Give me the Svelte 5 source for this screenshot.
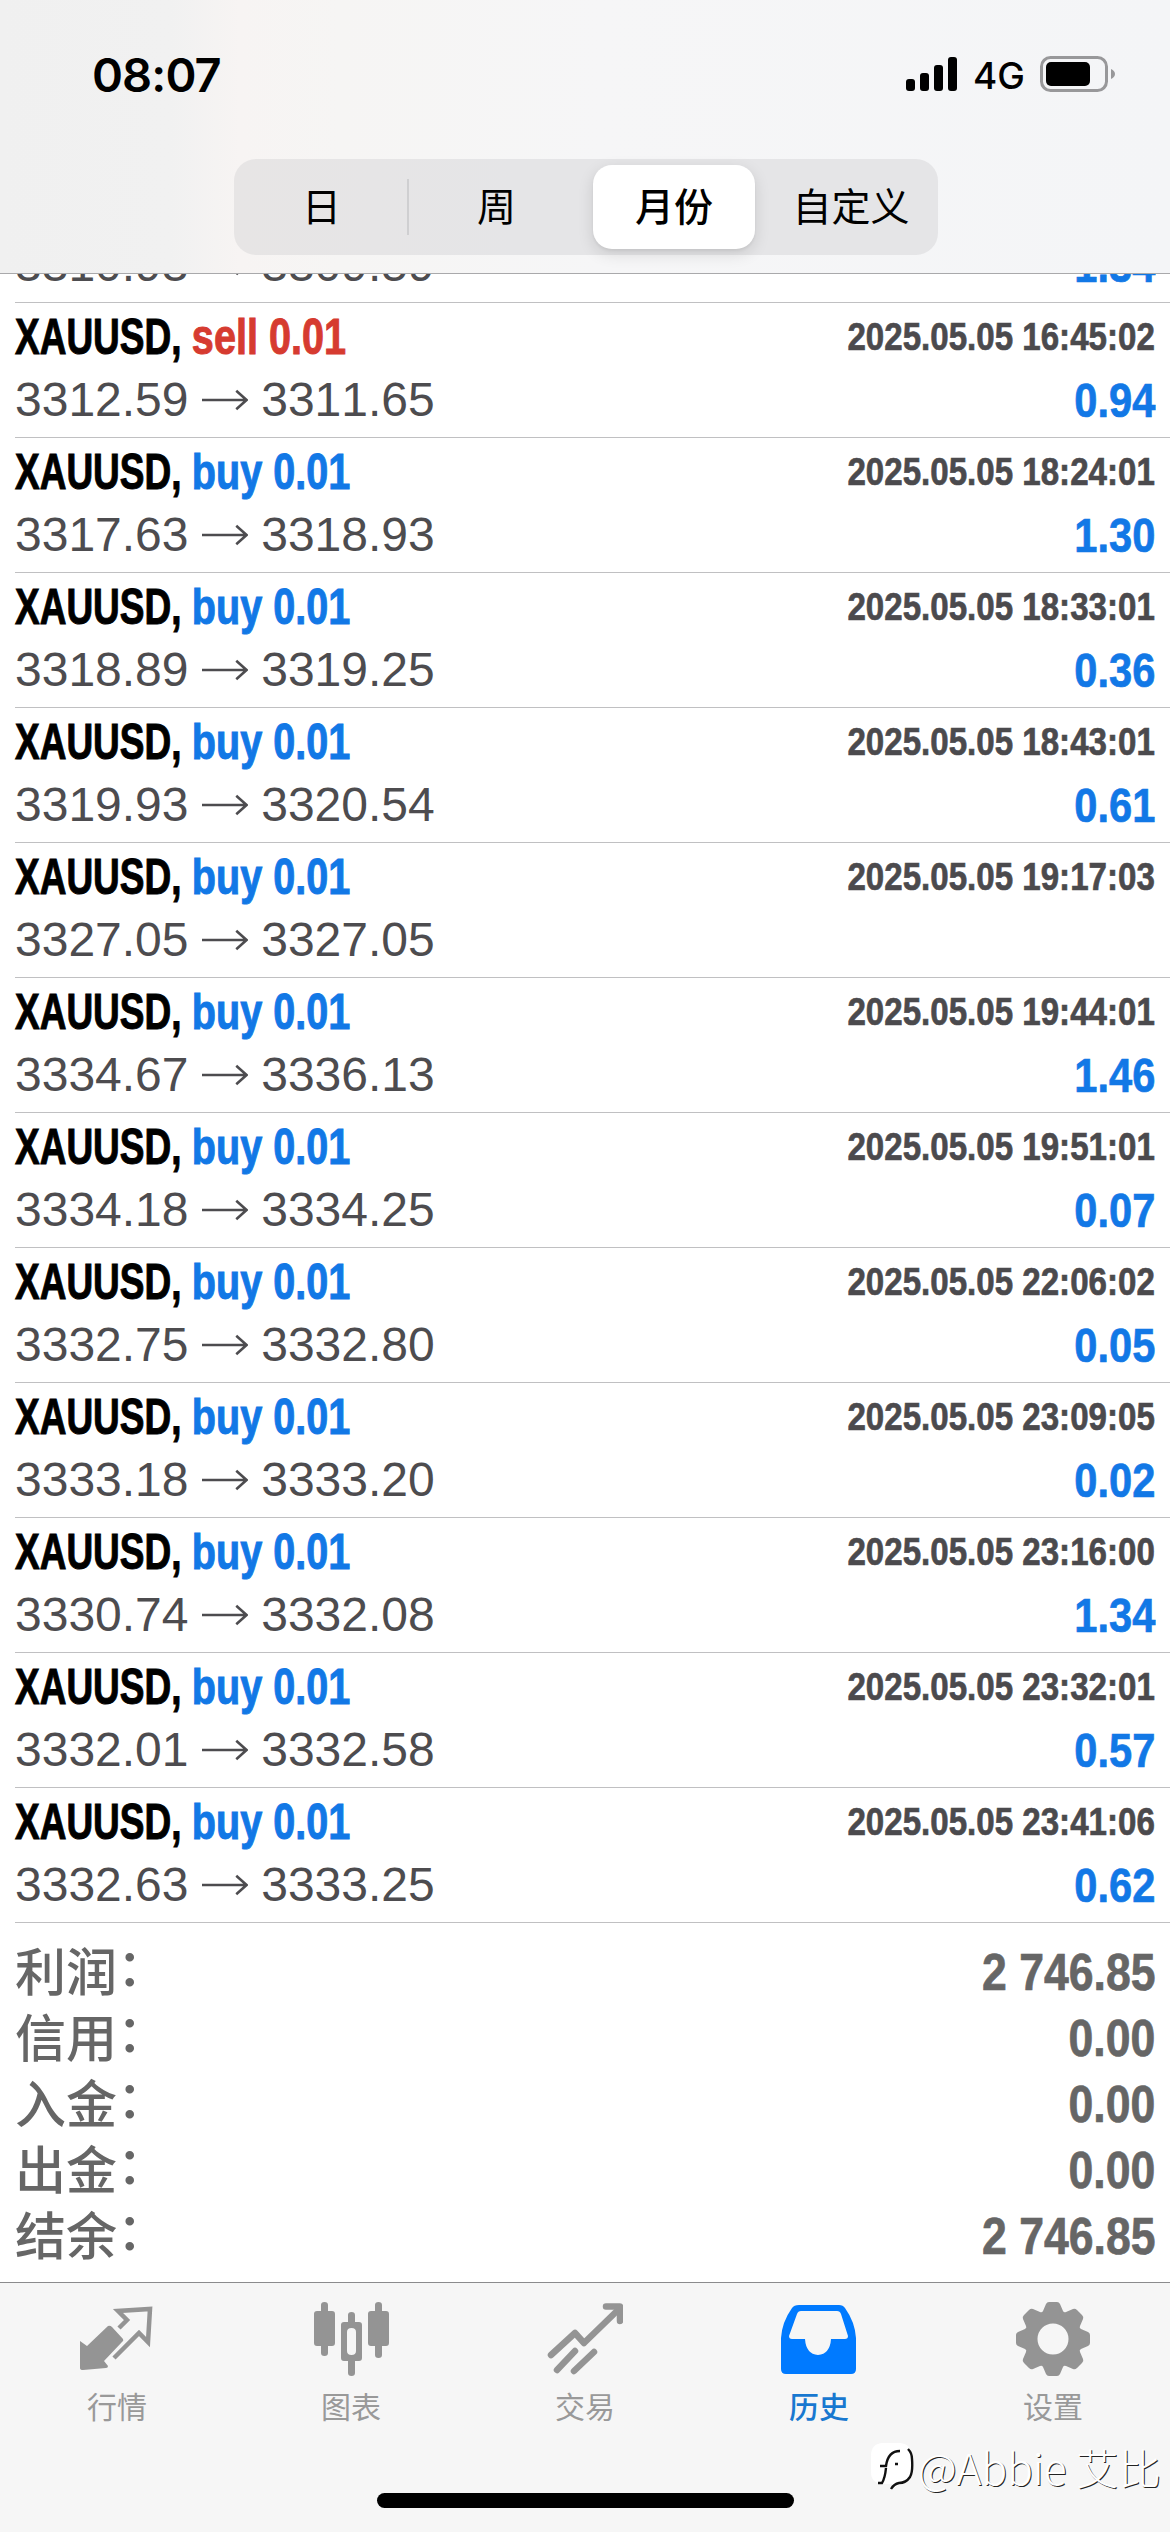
<script>
  const segments = ['日', '周', '月份', '自定义'];
  const selected = 2;

  // the list is scrolled: only the lower half of the first deal is in view
  const deals = [
    { open: '3310.93', close: '3309.59', profit: '1.34' },
    { side: 'sell', open: '3312.59', close: '3311.65', time: '2025.05.05 16:45:02', profit: '0.94' },
    { side: 'buy', open: '3317.63', close: '3318.93', time: '2025.05.05 18:24:01', profit: '1.30' },
    { side: 'buy', open: '3318.89', close: '3319.25', time: '2025.05.05 18:33:01', profit: '0.36' },
    { side: 'buy', open: '3319.93', close: '3320.54', time: '2025.05.05 18:43:01', profit: '0.61' },
    { side: 'buy', open: '3327.05', close: '3327.05', time: '2025.05.05 19:17:03', profit: '' },
    { side: 'buy', open: '3334.67', close: '3336.13', time: '2025.05.05 19:44:01', profit: '1.46' },
    { side: 'buy', open: '3334.18', close: '3334.25', time: '2025.05.05 19:51:01', profit: '0.07' },
    { side: 'buy', open: '3332.75', close: '3332.80', time: '2025.05.05 22:06:02', profit: '0.05' },
    { side: 'buy', open: '3333.18', close: '3333.20', time: '2025.05.05 23:09:05', profit: '0.02' },
    { side: 'buy', open: '3330.74', close: '3332.08', time: '2025.05.05 23:16:00', profit: '1.34' },
    { side: 'buy', open: '3332.01', close: '3332.58', time: '2025.05.05 23:32:01', profit: '0.57' },
    { side: 'buy', open: '3332.63', close: '3333.25', time: '2025.05.05 23:41:06', profit: '0.62' }
  ];

  const summary = [
    ['利润', '2 746.85'],
    ['信用', '0.00'],
    ['入金', '0.00'],
    ['出金', '0.00'],
    ['结余', '2 746.85']
  ];

  const tabs = [
    { id: 'quotes', label: '行情' },
    { id: 'charts', label: '图表' },
    { id: 'trade', label: '交易' },
    { id: 'history', label: '历史' },
    { id: 'settings', label: '设置' }
  ];
  const active = 'history';
</script>

<div class="screen">
  <header>
    <div class="status">
      <span class="clock">08:07</span>
      <div class="indicators">
        <svg class="signal" viewBox="0 0 51 34">
          <rect x="0" y="22" width="9" height="12" rx="3" />
          <rect x="14" y="16" width="9" height="18" rx="3" />
          <rect x="28" y="8" width="9" height="26" rx="3" />
          <rect x="42" y="0" width="9" height="34" rx="3" />
        </svg>
        <span class="network">4G</span>
        <svg class="battery" viewBox="0 0 76 36">
          <rect x="1.5" y="1.5" width="65" height="33" rx="9" fill="none" stroke="#98989a" stroke-width="3" />
          <rect x="6" y="6" width="44" height="24" rx="5" />
          <path d="M71 13q4 2 4 5t-4 5z" fill="#98989a" />
        </svg>
      </div>
    </div>
    <div class="segmented">
      {#each segments as segment, i}
        <div class="segment" class:selected={i === selected} class:divided={i === 0}>{segment}</div>
      {/each}
    </div>
  </header>

  <main>
    <div class="deals">
      {#each deals as deal}
        <div class="deal">
          {#if deal.side}
            <div class="line">
              <span class="symbol">XAUUSD, <span class="side {deal.side}">{deal.side} 0.01</span></span>
              <span class="time">{deal.time}</span>
            </div>
          {/if}
          <div class="line prices">
            <span class="price">
              {deal.open}
              <svg class="arrow" viewBox="0 0 47 22"><path d="M0 11H45M35 1.500L45.500 11L35 20.500" /></svg>
              {deal.close}
            </span>
            <span class="profit">{deal.profit}</span>
          </div>
        </div>
      {/each}
    </div>
    <div class="summary">
      {#each summary as [label, value]}
        <div class="total">
          <span class="label">{label}<span class="colon">：</span></span>
          <span class="value">{value}</span>
        </div>
      {/each}
    </div>
  </main>

  <nav>
    {#each tabs as tab}
      <div class="tab" class:active={tab.id === active}>
        <svg class="icon" viewBox="0 0 76 76">
          {#if tab.id === 'quotes'}
            <path d="M1 40l7 5L29 25q2-1 4 1l11 12q1 2-1 3L25 60l4 5q0 2-2 2L4 69q-3 0-3-2z" />
            <path class="stroke thin" d="M40 27l8-8-9-9L71 8 69 41 60 32 35 57" />
          {:else if tab.id === 'charts'}
            <path d="M8 4q0-3 3.500-3T15 4v6h4q3 0 3 3v29q0 3-3 3h-4v7q0 3-3.500 3T8 52v-7H4q-3 0-3-3V13q0-3 3-3h4z" />
            <path d="M62 4q0-3 3.500-3T69 4v6h4q3 0 3 3v29q0 3-3 3h-4v9q0 3-3.500 3T62 54v-9h-4q-3 0-3-3V13q0-3 3-3h4z" />
            <path fill-rule="evenodd" d="M35 14q0-3 3.500-3T42 14v7h4q3 0 3 3v33q0 3-3 3h-4v12q0 3-3.500 3T35 72V60h-4q-3 0-3-3V24q0-3 3-3h4zM38.500 27q-4.500 0-4.500 4v19q0 4 4.500 4t4.500-4V31q0-4-4.500-4z" />
          {:else if tab.id === 'trade'}
            <path class="stroke" d="M4 54L28 32l9 10L72 8" />
            <path class="stroke" d="M59 5.500H73V20" />
            <path class="stroke" d="M28 50L10 69M47 51L27 70" />
          {:else if tab.id === 'history'}
            <path fill-rule="evenodd" d="M18 4H58q4 0 6 3 10 14 11 30V68q0 5-5 5H5q-5 0-5-5V37Q1 21 11 7q2-3 7-3zM20 10q-3 0-4 3L8 35q0 3 3 3H24q1 15 13 16 12-1 13-16H64q3 0 3-3L60 13q-1-3-4-3z" />
          {:else}
            <path fill-rule="evenodd" d="M31 3q1-2 3-2h8q2 0 3 2l3 7q1 2 3 1l7-3q2-1 4 1l5 5q2 2 1 4l-3 7q-1 2 1 3l7 3q2 1 2 3v8q0 2-2 3l-7 3q-2 1-1 3l3 7q1 2-1 4l-5 5q-2 2-4 1l-7-3q-2-1-3 1l-3 7q-1 2-3 2h-8q-2 0-3-2l-3-7q-1-2-3-1l-7 3q-2 1-4-1l-5-5q-2-2-1-4l3-7q1-2-1-3l-7-3q-2-1-2-3v-8q0-2 2-3l7-3q2-1 1-3l-3-7q-1-2 1-4l5-5q2-2 4-1l7 3q2 1 3-1zM38 22.500a15.500 15.500 0 1 0 0 31a15.500 15.500 0 1 0 0-31z" />
          {/if}
        </svg>
        <span>{tab.label}</span>
      </div>
    {/each}
    <div class="home"></div>
    <div class="watermark">
      <svg viewBox="0 0 44 50">
        <path class="bubble" d="M12 1H30Q42 2 42 16V30Q42 40 32 41L22 47 22 42H12Q1 41 1 30V14Q1 2 12 1z" />
        <path class="edge" d="M38 7Q42 11 42 17 43 30 40 35 36 41 29 41 24 42 21 47M10 24H16Q18 9 30 9M16 26Q15 36 12 41H8M25 22H28" />
      </svg>
      <span>@Abbie 艾比</span>
    </div>
  </nav>
</div>

<style>
  :global(body) {
    background: #fff;
  }

  .screen {
    width: 1170px;
    height: 2532px;
    display: flex;
    flex-direction: column;
    overflow: hidden;
    background: #fff;
    color: #000;
    font-family: "Liberation Sans", "Noto Sans CJK SC", sans-serif;
    font-kerning: none;
  }

  header {
    flex: none;
    box-sizing: border-box;
    height: 274px;
    border-bottom: 1px solid #a9a9ab;
    background: linear-gradient(90deg, #f0f0f0 0, #f1f1f1 170px, #f7f4f3 240px, #f6f5f4 340px, #f6f6f7 600px, #f4f5f7 100%);
  }

  .status {
    height: 159px;
    display: flex;
    justify-content: space-between;
    padding: 0 54px 0 92px;
  }

  .clock {
    font: 600 47px/56px Inter, sans-serif;
    letter-spacing: -0.9px;
    margin-top: 47px;
  }

  .indicators {
    display: flex;
    align-items: flex-start;
  }

  .signal {
    width: 51px;
    height: 34px;
    margin-top: 57px;
  }

  .network {
    font: 500 37px/44px Inter, sans-serif;
    margin: 54px 15px 0 16px;
  }

  .battery {
    width: 76px;
    height: 36px;
    margin-top: 56px;
  }

  .segmented {
    width: 704px;
    height: 96px;
    margin-left: 234px;
    display: grid;
    grid-template-columns: 175px 175px 180px 1fr;
    border-radius: 22px;
    background: linear-gradient(90deg, #e7e5e5, #e5e5e7 40%, #e5e5e7);
  }

  .segment {
    margin: 6px 0;
    box-sizing: border-box;
    height: 84px;
    text-align: center;
    font: 400 39px/79px "Noto Sans CJK SC", sans-serif;
    position: relative;
  }

  .segment.divided::after {
    content: "";
    position: absolute;
    right: 0;
    top: 14px;
    width: 2px;
    height: 56px;
    background: #cfcfd1;
  }

  .segment.selected {
    margin: 6px 9px;
    border-radius: 19px;
    background: #fff;
    font-weight: 500;
    box-shadow: 0 5px 16px #0000001f, 0 2px 3px #0000000d;
  }

  main {
    flex: 1;
    overflow: hidden;
  }

  .deals {
    margin-top: -39px;
    padding-left: 15px;
  }

  .deal {
    height: 135px;
    box-sizing: border-box;
    border-bottom: 1px solid #c0c0c2;
    padding-right: 15px;
  }

  .deal:first-child {
    height: 68px;
  }

  .line {
    height: 67px;
    display: flex;
    justify-content: space-between;
    line-height: 67px;
  }

  /* condensed bold, squeezed from the regular width */
  .symbol,
  .time,
  .profit,
  .value {
    font-weight: 700;
    white-space: pre;
    -webkit-text-stroke: 0.7px;
    transform-origin: right;
  }

  .symbol {
    font-size: 50px;
    line-height: 69px;
    -webkit-text-stroke-width: 1px;
    transform: scaleX(0.74);
    transform-origin: left;
  }

  .side {
    display: inline-block;
    transform: scaleX(1.07);
    transform-origin: left;
  }

  .sell {
    color: #d63b30;
  }

  .buy {
    color: #1278e6;
  }

  .time {
    font-size: 39.5px;
    color: #4b4a4d;
    transform: scaleX(0.838);
  }

  .prices {
    height: 60px;
    line-height: 60px;
  }

  .price {
    font-size: 48px;
    color: #4d4c4f;
  }

  .arrow {
    width: 46px;
    height: 22px;
    fill: none;
    stroke: currentColor;
    stroke-width: 2.6;
    vertical-align: 5px;
  }

  .profit {
    font-size: 49px;
    color: #1278e6;
    transform: scaleX(0.85);
  }

  .summary {
    padding: 15px 15px 0;
    color: #666;
  }

  .total {
    height: 66px;
    display: flex;
    justify-content: space-between;
  }

  .label {
    font: 500 51px/62px "Noto Sans CJK SC", sans-serif;
  }

  .colon {
    position: relative;
    top: -5px;
  }

  .value {
    font-size: 51.5px;
    line-height: 68px;
    transform: scaleX(0.865);
  }

  nav {
    flex: none;
    position: relative;
    box-sizing: border-box;
    height: 250px;
    display: grid;
    grid-template-columns: repeat(5, 1fr);
    border-top: 1px solid #8b8b8d;
    background: #f6f6f6;
  }

  .tab {
    display: flex;
    flex-direction: column;
    align-items: center;
    color: #999;
    font: 400 30px/40px "Noto Sans CJK SC", sans-serif;
  }

  .tab.active {
    color: #1878d0;
    font-weight: 500;
  }

  .icon {
    width: 76px;
    height: 76px;
    margin: 18px 0 8px;
    fill: #949494;
  }

  .active .icon {
    fill: #007aff;
  }

  .stroke {
    fill: none;
    stroke: #949494;
    stroke-width: 6.5;
    stroke-linecap: round;
    stroke-linejoin: round;
  }

  .stroke.thin {
    stroke-width: 4.5;
    stroke-linecap: butt;
    stroke-linejoin: miter;
  }

  .home {
    position: absolute;
    left: 377px;
    bottom: 24px;
    width: 417px;
    height: 15px;
    border-radius: 8px;
    background: #000;
  }

  .watermark {
    position: absolute;
    right: 9px;
    bottom: 38px;
    display: flex;
    align-items: center;
    gap: 4px;
    color: #fff;
    font: 300 42.5px/54px "Noto Sans CJK SC", sans-serif;
    text-shadow: 1px 1px 0 #222;
  }

  .watermark svg {
    width: 44px;
    height: 50px;
  }

  .bubble {
    fill: #fff;
  }

  .edge {
    fill: none;
    stroke: #111;
    stroke-width: 2.4;
  }
</style>
